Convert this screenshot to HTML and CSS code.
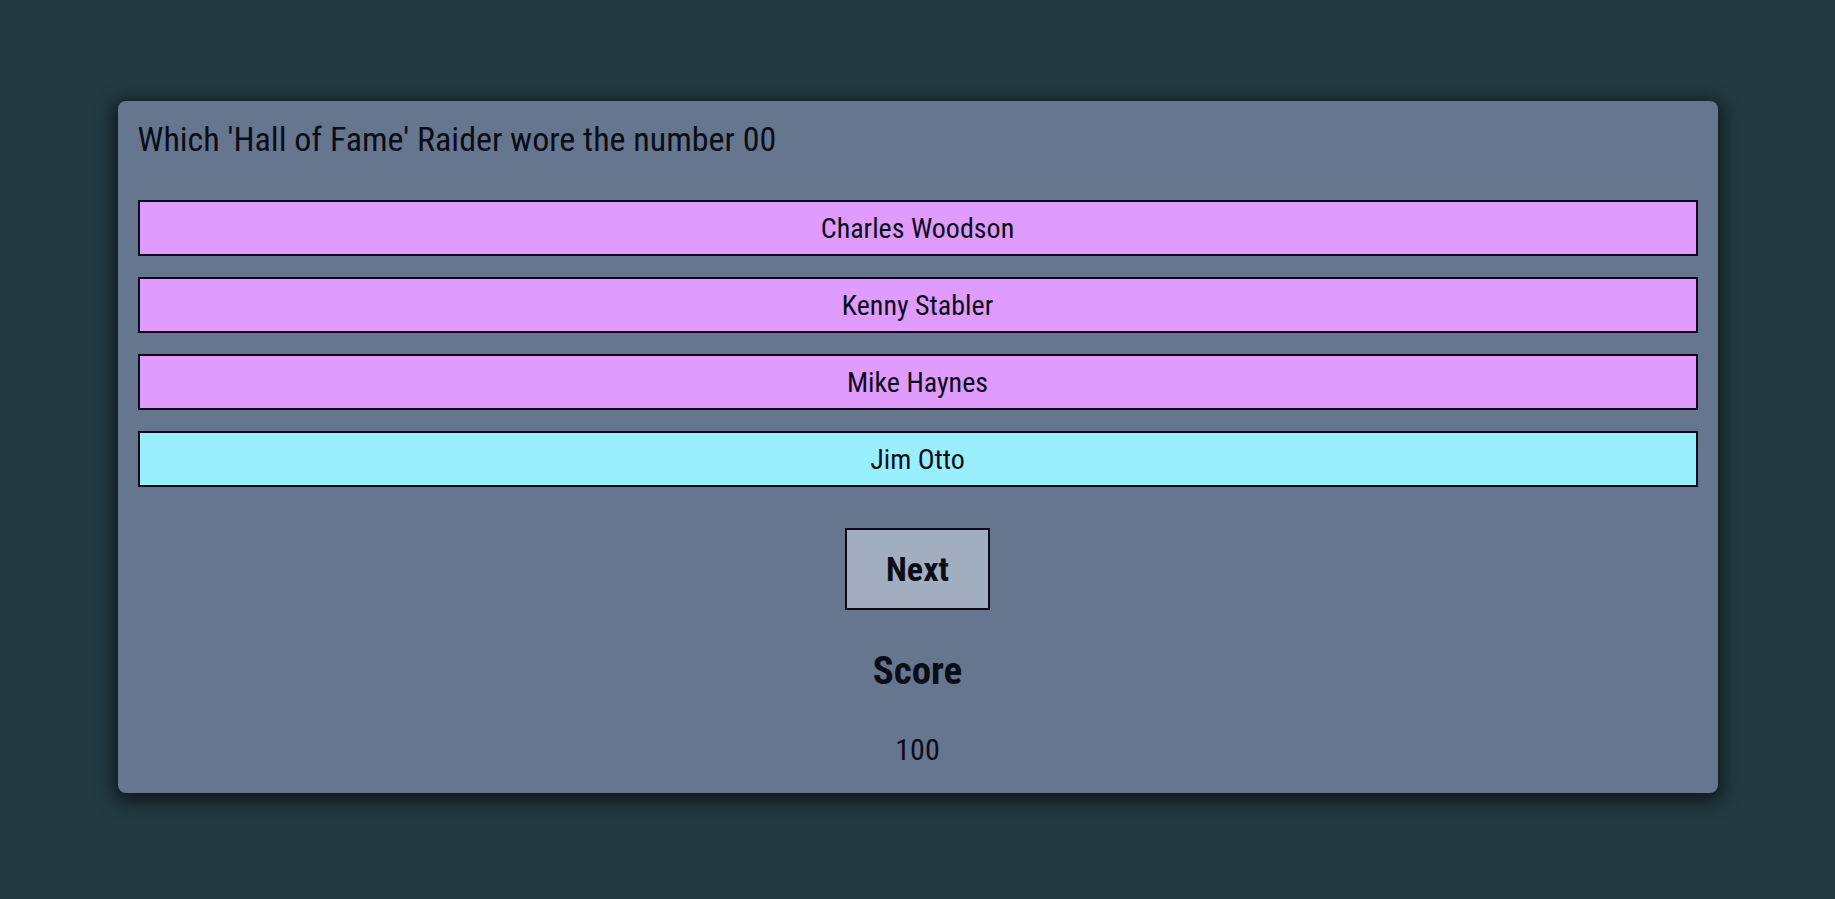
FILE: index.html
```html
<!DOCTYPE html>
<html lang="en">
<head>
<meta charset="utf-8">
<title>Raiders Quiz</title>
<link rel="stylesheet" href="styles.css">
</head>
<body>
<main class="quiz">
  <h2 class="question">Which 'Hall of Fame' Raider wore the number 00</h2>
  <div class="answers">
    <button class="answer">Charles Woodson</button>
    <button class="answer">Kenny Stabler</button>
    <button class="answer">Mike Haynes</button>
    <button class="answer correct">Jim Otto</button>
  </div>
  <div class="controls">
    <button class="next">Next</button>
    <h3 class="score-title">Score</h3>
    <p class="score">100</p>
  </div>
</main>
</body>
</html>
```
FILE: styles.css
```css
html, body {
  margin: 0;
  padding: 0;
}
body {
  background: #223a41;
  font-family: "Roboto Condensed", Roboto, "Liberation Sans", sans-serif;
  color: #0a0d18;
  padding: 101px 0 100px;
}
.quiz {
  box-sizing: border-box;
  width: 1600px;
  margin: 0 auto;
  background: #65768e;
  border-radius: 8px;
  padding: 20px 20px 25px;
  box-shadow: 0 4px 18px 4px rgba(0, 0, 0, 0.6);
}
.question {
  margin: 0;
  font-size: 34px;
  line-height: 36px;
  font-weight: 400;
}
.answers {
  display: flex;
  flex-direction: column;
  gap: 21px;
  margin-top: 43px;
}
.answer {
  box-sizing: border-box;
  height: 56px;
  width: 100%;
  border: 2px solid #0b0a1c;
  background: #e09bff;
  font-family: inherit;
  color: inherit;
  font-size: 28px;
  padding: 0;
  cursor: pointer;
}
.answer.correct {
  background: #9aefff;
}
.controls {
  display: flex;
  flex-direction: column;
  align-items: center;
}
.next {
  box-sizing: border-box;
  margin-top: 41px;
  width: 145px;
  height: 82px;
  border: 2px solid #0b0a1c;
  background: #a1aec0;
  font-family: inherit;
  color: inherit;
  font-size: 34px;
  font-weight: 700;
  padding: 0;
  cursor: pointer;
}
.score-title {
  margin: 41px 0 0;
  font-size: 39px;
  line-height: 40px;
  font-weight: 700;
}
.score {
  margin: 41px 0 0;
  font-size: 30px;
  line-height: 36px;
}
```
